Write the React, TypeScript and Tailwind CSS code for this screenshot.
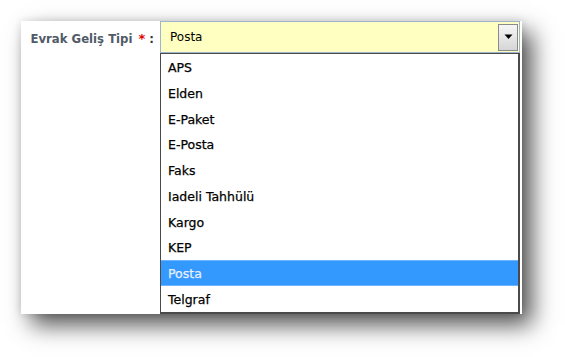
const options = ['APS', 'Elden', 'E-Paket', 'E-Posta', 'Faks', 'Iadeli Tahhülü', 'Kargo', 'KEP', 'Posta', 'Telgraf'];

export default function App() {
  const selected = 'Posta';

  return (
    <div className="w-[565px] h-[357px] bg-white pt-[21px] pl-[21px] font-['DejaVu_Sans',sans-serif]">
      {/* Card */}
      <div className="w-[501px] h-[293px] bg-white flex shadow-[10px_11px_22px_rgba(0,0,0,0.68),0_0_8px_rgba(0,0,0,0.12)]">
        {/* Label */}
        <div className="w-[139px] flex justify-end pr-[6px] pt-[11px] text-[11.7px] font-bold leading-[14px]">
          <span className="text-[#515b68]">Evrak Geliş Tipi</span>
          <span className="text-[#e00000] ml-[6px] text-[13px]">*</span>
          <span className="text-[#333] ml-[4px]">:</span>
        </div>

        {/* Select + open list */}
        <div className="w-[360px] flex flex-col">
          <div className="h-[32px] bg-[#ffffc2] border border-[#9fb3cc] flex items-center justify-between pl-[9px] pr-[1px]">
            <span className="text-[12px] text-[#000] leading-none">{selected}</span>
            <div className="w-[20px] h-[27px] border border-[#8a8a8a] bg-gradient-to-b from-[#f6f6f6] to-[#d6d6d6] flex items-center justify-center">
              <svg width="9" height="6" viewBox="0 0 9 6">
                <path d="M0.5 0.5 L8.5 0.5 L4.5 5 Z" fill="#000" />
              </svg>
            </div>
          </div>

          <ul className="bg-white border-t border-l border-r-2 border-b-2 border-[#4a4a4a]">
            {options.map((opt) => (
              <li
                key={opt}
                className={`h-[25.75px] flex items-center pl-[7px] pt-[3px] text-[12.5px] leading-none [-webkit-text-stroke:0.25px] ${
                  opt === selected
                    ? 'bg-[#3399ff] text-[#e6f0ff] border-y border-[#6db3ff]'
                    : 'text-[#000]'
                }`}
              >
                {opt}
              </li>
            ))}
          </ul>
        </div>
      </div>
    </div>
  );
}
